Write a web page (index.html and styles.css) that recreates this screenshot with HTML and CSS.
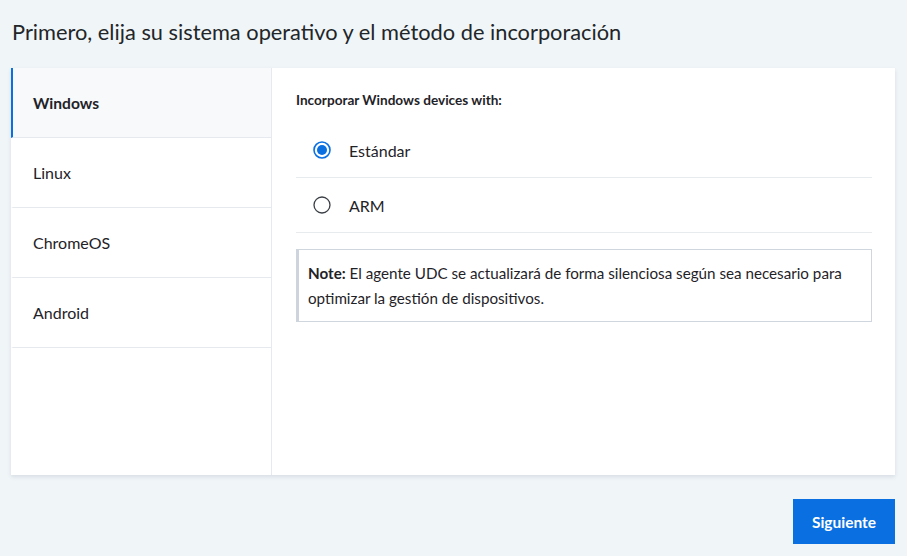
FILE: index.html
```html
<!DOCTYPE html>
<html lang="es">
<head>
<meta charset="utf-8">
<link rel="stylesheet" href="styles.css">
</head>
<body>
<div class="page">
  <h1 class="title">Primero, elija su sistema operativo y el método de incorporación</h1>
  <div class="card">
    <nav class="sidebar">
      <div class="tab active">Windows</div>
      <div class="tab">Linux</div>
      <div class="tab">ChromeOS</div>
      <div class="tab">Android</div>
    </nav>
    <section class="content">
      <div class="label">Incorporar Windows devices with:</div>
      <div class="options">
        <label class="option">
          <svg class="radio" width="18" height="18" viewBox="0 0 18 18"><circle cx="9" cy="9" r="8" fill="#fff" stroke="#0a6fe0" stroke-width="1.6"/><circle cx="9" cy="9" r="5" fill="#0a6fe0"/></svg>
          <span>Estándar</span>
        </label>
        <label class="option">
          <svg class="radio" width="18" height="18" viewBox="0 0 18 18"><circle cx="9" cy="9" r="8" fill="#fff" stroke="#3a3f45" stroke-width="1.3"/></svg>
          <span>ARM</span>
        </label>
      </div>
      <div class="note"><b>Note:</b> El agente UDC se actualizará de forma silenciosa según sea necesario para optimizar la gestión de dispositivos.</div>
    </section>
  </div>
  <div class="footer">
    <button class="next">Siguiente</button>
  </div>
</div>
</body>
</html>
```
FILE: styles.css
```css
html, body {
  margin: 0;
  padding: 0;
  background: #f0f5f8;
  font-family: Lato, "Open Sans", sans-serif;
  color: #1f2328;
}
.page {
  padding: 0 12px 0 11px;
}
.title {
  margin: 0;
  padding: 18px 0 0 1px;
  height: 50px;
  font-size: 21.8px;
  font-weight: 400;
  line-height: 28px;
  color: #222628;
}
.card {
  display: flex;
  background: #fff;
  height: 407px;
  box-shadow: 0 2px 4px rgba(30, 60, 90, 0.12);
}
.sidebar {
  width: 260px;
  border-right: 1px solid #e6eaee;
  display: flex;
  flex-direction: column;
}
.tab {
  height: 69px;
  border-bottom: 1px solid #e6eaee;
  display: flex;
  align-items: center;
  padding-left: 20px;
  font-size: 16px;
  color: #1f2328;
  border-left: 2px solid transparent;
}
.tab.active {
  background: #f7f9fb;
  border-left-color: #0a6fe0;
  font-weight: 700;
  font-size: 15.6px;
}
.content {
  flex: 1;
  padding: 24px 23px 0 24px;
}
.label {
  font-size: 13.6px;
  font-weight: 700;
  line-height: 16px;
  color: #1f2328;
}
.options {
  margin-top: 15px;
}
.option {
  display: flex;
  align-items: center;
  height: 54px;
  border-bottom: 1px solid #e8ebee;
  padding-left: 17px;
  font-size: 16px;
  gap: 18px;
}
.radio {
  display: block;
}
.note {
  margin-top: 16px;
  border: 1px solid #cfd6dd;
  border-left: 3px solid #cdd4dc;
  padding: 11px 12px 10px 9px;
  font-size: 15.2px;
  line-height: 25px;
  color: #1f2328;
}
.footer {
  display: flex;
  justify-content: flex-end;
  padding-top: 24px;
}
.next {
  width: 102px;
  height: 45px;
  border: none;
  background: #0a6fe0;
  color: #fff;
  font-family: Lato, "Open Sans", sans-serif;
  font-weight: 700;
  font-size: 15.5px;
  padding: 0;
}
```
